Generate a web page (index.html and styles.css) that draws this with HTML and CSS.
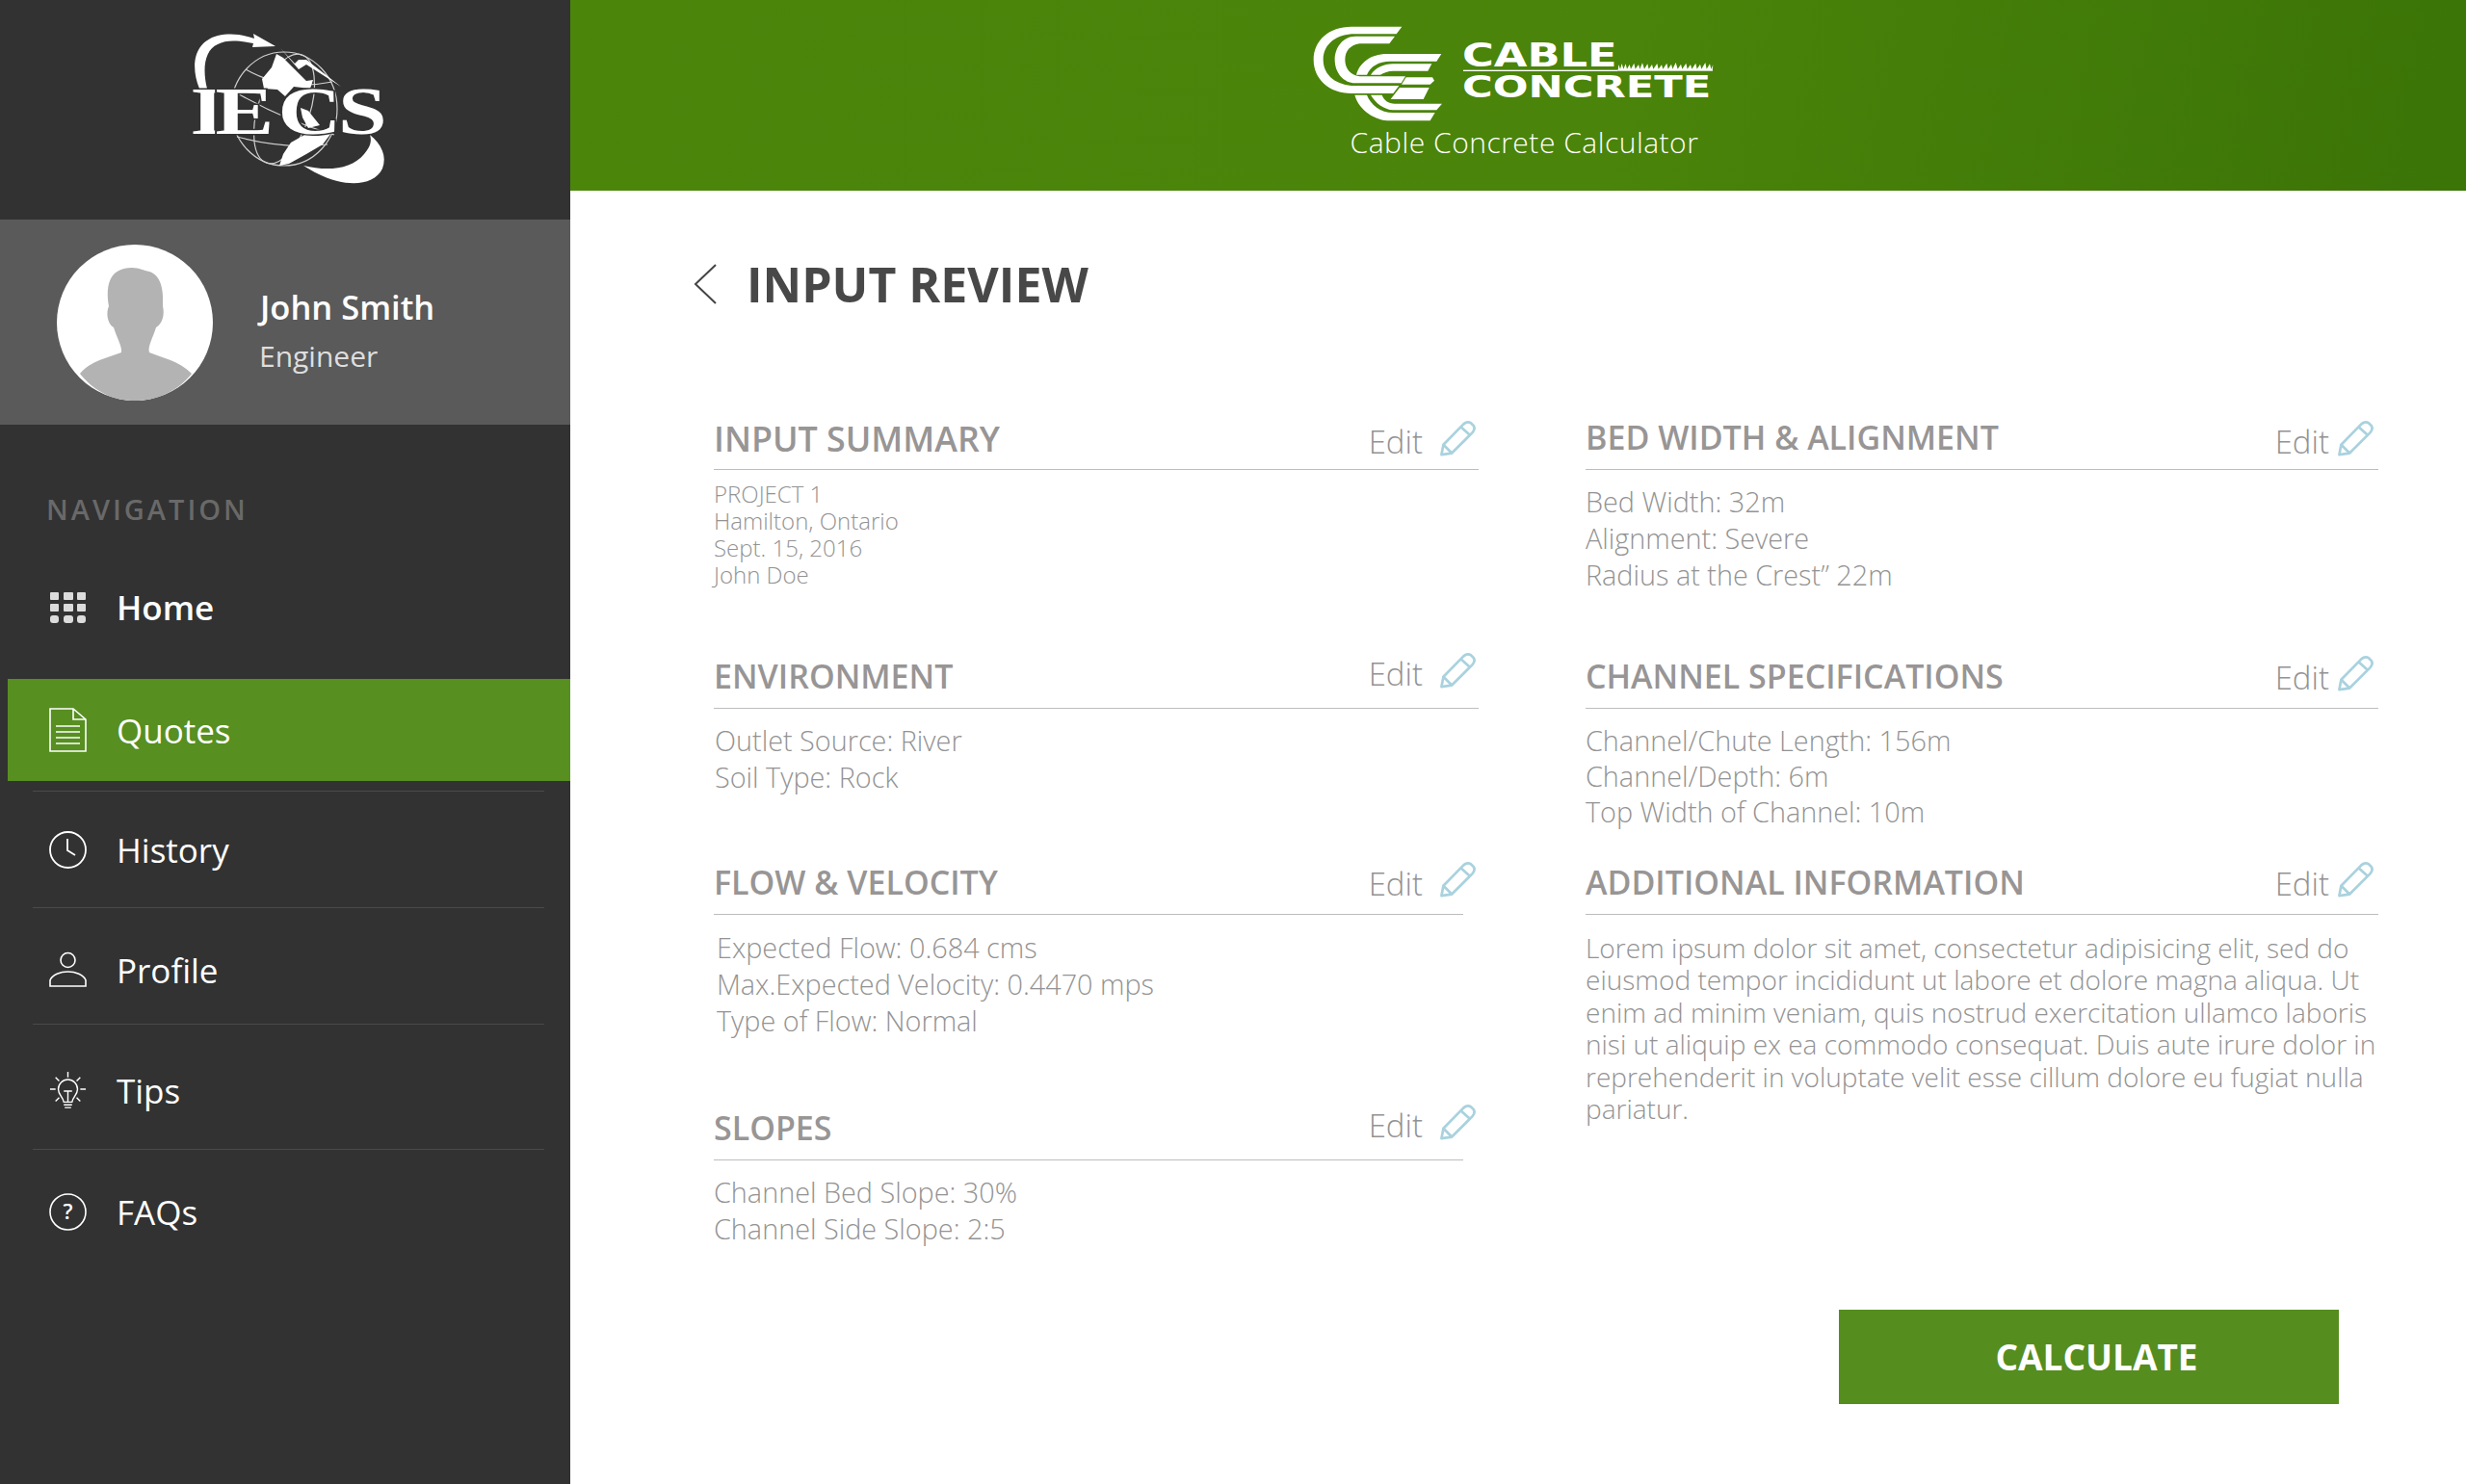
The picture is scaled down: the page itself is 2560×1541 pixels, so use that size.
FILE: index.html
```html
<!DOCTYPE html>
<html lang="en">
<head>
  <meta charset="UTF-8" />
  <title>Cable Concrete Calculator - Input Review</title>
  <link rel="stylesheet" href="styles.css">
</head>
<body>
  <svg class="defs" width="0" height="0">
    <symbol id="pencil" viewBox="0 0 38 38">
      <path d="M1.5 36.5 L3.5 26 L25 4 Q29 0.5 33 3 L35.5 5.5 Q38 9 34.5 13 L12.5 35 Z M3.5 26 L12.5 35 M22 7 L32 16" fill="none" stroke="#a9d2de" stroke-width="2.8" stroke-linejoin="round"/>
    </symbol>
  </svg>

  <aside class="sidebar">
    <div class="brand">
      <svg class="iecs-logo" width="592" height="228" viewBox="0 0 592 228">
        <g fill="none" stroke="#cfcfcf" stroke-width="1.2">
          <ellipse cx="295" cy="113" rx="55" ry="59"/>
          <ellipse cx="295" cy="113" rx="27" ry="59" transform="rotate(18 295 113)"/>
          <path d="M243 95 Q295 125 347 140 M246 142 Q295 155 340 150 M255 72 Q295 95 345 85"/>
        </g>
        <path d="M207 92 C198 70 200 44 226 37 C240 34 252 36 264 40 L263 35 L286 48 L262 49 L263 45 C248 42 235 41 226 46 C212 52 210 72 215 92 Z" fill="#fff"/>
        <path d="M291 50 L310 72 L318 67 L354 90 L318 62 L310 62 L306 66 Z" fill="#fff"/>
        <path d="M315 172 C340 178 365 176 378 160 C385 152 386 146 384 140 C396 150 402 162 397 175 C390 190 370 193 350 188 C335 184 325 178 315 172 Z" fill="#fff"/>
        <path d="M287 56 L294 60 L306 72 L318 84 L325 83 L322 92 L305 90 L296 100 L288 93 L274 92 L272 82 L282 70 Z" fill="#fff"/>
        <path d="M302 148 L325 135 L344 138 L335 150 L318 160 L300 170 L290 172 L294 160 Z" fill="#fff"/>
        <text class="iecs-text" transform="scale(1.3 1)" y="139">
          <tspan x="152">I</tspan><tspan x="172">E</tspan><tspan x="222">C</tspan><tspan x="270">S</tspan>
        </text>
        <path d="M312 112 L320 115 L332 130 L320 133 L314 122 Z" fill="#fff"/>
      </svg>
    </div>

    <div class="profile">
      <svg class="avatar" width="162" height="162" viewBox="0 0 162 162">
        <circle cx="81" cy="81" r="81" fill="#fff"/>
        <path d="M24 134 C36 120 52 118 67 112 C68 106 62 96 59 86 C52 82 51 70 54 64 C50 40 56 24 78 24 C86 24 90 27 96 28 C108 32 111 46 110 64 C112 72 110 82 103 86 C100 96 94 106 96 112 C110 118 126 120 140 134 C126 152 104 162 81 162 C58 162 38 152 24 134 Z" fill="#b3b3b3"/>
      </svg>
      <div class="profile-text">
        <div class="profile-name">John Smith</div>
        <div class="profile-role">Engineer</div>
      </div>
    </div>

    <div class="nav-label">NAVIGATION</div>

    <ul class="nav">
      <li class="nav-item nav-home">
        <a class="nav-link nav-strong">
          <svg class="nav-icon" viewBox="0 0 39 39" fill="#dcdcdc">
            <rect x="1" y="4" width="9" height="8" rx="1"/><rect x="15" y="4" width="10" height="8" rx="1"/><rect x="29" y="4" width="9" height="8" rx="1"/>
            <rect x="1" y="16" width="9" height="8" rx="1"/><rect x="15" y="16" width="10" height="8" rx="1"/><rect x="29" y="16" width="9" height="8" rx="1"/>
            <rect x="1" y="28" width="9" height="8" rx="3"/><rect x="15" y="28" width="10" height="8" rx="3"/><rect x="29" y="28" width="9" height="8" rx="3"/>
          </svg>
          Home
        </a>
      </li>
      <li class="nav-item nav-quotes">
        <a class="nav-link active">
          <svg class="nav-icon nav-icon-tall" viewBox="0 0 39 46" fill="none" stroke="#fff" stroke-width="1.6">
            <path d="M1 1 H25 L38 12 V45 H1 Z M25 1 V12 H38"/>
            <path d="M7 19 H32 M7 25 H32 M7 31 H32 M7 37 H32"/>
          </svg>
          Quotes
        </a>
      </li>
      <li class="nav-item">
        <a class="nav-link">
          <svg class="nav-icon" viewBox="0 0 39 39" fill="none" stroke="#fff" stroke-width="1.8">
            <circle cx="19.5" cy="19.5" r="18.5"/>
            <path d="M19 8 V20 L27 25"/>
          </svg>
          History
        </a>
      </li>
      <li class="nav-item nav-low">
        <a class="nav-link">
          <svg class="nav-icon" viewBox="0 0 39 39" fill="none" stroke="#fff" stroke-width="1.6">
            <circle cx="19.5" cy="9" r="7.5"/>
            <path d="M1 36 V30 C3 24 12 21 19.5 21 C27 21 36 24 38 30 V36 Z"/>
          </svg>
          Profile
        </a>
      </li>
      <li class="nav-item nav-low nav-tall">
        <a class="nav-link">
          <svg class="nav-icon" viewBox="0 0 39 41" fill="none" stroke="#fff" stroke-width="1.5">
            <path d="M19.5 0 V6 M0 19 H6 M33 19 H39 M6 6 L10 10 M33 6 L29 10 M6 32 L10 28 M33 32 L29 28"/>
            <path d="M15 33 C14 27 9 25 9 19 A10.5 10.5 0 0 1 30 19 C30 25 25 27 24 33 Z M19.5 33 V21 M15 21 H24 M15 36 H24 M16 39 H23"/>
          </svg>
          Tips
        </a>
      </li>
      <li class="nav-item nav-low nav-last">
        <a class="nav-link">
          <svg class="nav-icon" viewBox="0 0 39 39" fill="none" stroke="#fff" stroke-width="1.6">
            <circle cx="19.5" cy="19.5" r="18.5"/>
            <text class="faq-mark" x="19.5" y="27">?</text>
          </svg>
          FAQs
        </a>
      </li>
    </ul>
  </aside>

  <div class="main">
    <header class="topbar">
      <svg class="cc-logo" width="420" height="105" viewBox="190 80 1260 315">
        <g fill="#fff">
          <path d="M467 82 H310 C240 82 192 125 192 185 C192 245 240 290 310 290 H440 L458 266 H320 C265 266 222 235 222 185 C222 135 265 105 320 105 H450 Z"/>
          <path d="M445 112 H322 C285 112 258 145 258 185 C258 225 285 258 322 258 H465 L478 237 H335 C305 232 290 212 290 185 C290 158 305 140 335 135 H428 Z"/>
          <path d="M590 167 H420 C370 167 335 195 325 232 H358 C370 205 395 190 430 190 H575 Z"/>
          <path d="M560 198 H440 C410 198 385 210 370 232 H400 C410 225 425 220 440 220 H548 Z"/>
          <path d="M320 295 C335 345 385 375 430 375 H555 L570 350 H440 C400 350 370 325 358 295 Z"/>
          <path d="M370 295 C385 320 410 340 440 342 H575 L592 322 H445 C425 322 410 310 405 295 Z"/>
          <path d="M480 240 H562 L568 250 L555 262 H466 Z"/>
          <path d="M460 272 H552 L534 308 H432 Z"/>
          <rect x="658" y="217" width="482" height="4"/>
          <rect x="1140" y="216" width="295" height="4"/>
          <path d="M1140 218 L1142 200 L1147 214 L1152 197 L1157 214 L1164 198 L1168 214 L1176 200 L1180 214 L1190 196 L1194 214 L1204 200 L1208 214 L1216 195 L1222 214 L1232 198 L1236 214 L1246 200 L1250 214 L1262 197 L1266 214 L1276 201 L1280 214 L1292 196 L1296 214 L1306 199 L1310 214 L1320 194 L1326 214 L1336 199 L1340 214 L1352 196 L1356 214 L1366 200 L1370 214 L1382 196 L1386 214 L1396 199 L1400 214 L1412 194 L1416 214 L1426 198 L1430 214 L1436 201 L1434 218 Z"/>
          <text class="cc-word" x="655" y="205" font-size="103" textLength="482" lengthAdjust="spacingAndGlyphs">CABLE</text>
          <text class="cc-word" x="655" y="302" font-size="96" textLength="775" lengthAdjust="spacingAndGlyphs">CONCRETE</text>
        </g>
      </svg>
      <div class="topbar-title">Cable Concrete Calculator</div>
    </header>

    <div class="title-row">
      <svg class="back" width="24" height="42" viewBox="0 0 24 42" fill="none" stroke="#444" stroke-width="2">
        <path d="M23 1 L2 21 L23 41"/>
      </svg>
      <h1>INPUT REVIEW</h1>
    </div>

    <div class="review-grid">
      <section>
        <div class="head head-first">
          <h2 class="h2-wide">INPUT SUMMARY</h2>
          <span class="edit">Edit</span>
          <svg class="pencil"><use href="#pencil"/></svg>
        </div>
        <div class="rule"></div>
        <div class="summary">PROJECT 1<br>Hamilton, Ontario<br>Sept. 15, 2016<br>John Doe</div>
      </section>

      <section>
        <div class="head head-right head-first">
          <h2>BED WIDTH &amp; ALIGNMENT</h2>
          <span class="edit">Edit</span>
          <svg class="pencil"><use href="#pencil"/></svg>
        </div>
        <div class="rule"></div>
        <div class="info">Bed Width: 32m<br>Alignment: Severe<br>Radius at the Crest” 22m</div>
      </section>

      <section>
        <div class="head head-up">
          <h2>ENVIRONMENT</h2>
          <span class="edit">Edit</span>
          <svg class="pencil"><use href="#pencil"/></svg>
        </div>
        <div class="rule"></div>
        <div class="info info-env">Outlet Source: River<br>Soil Type: Rock</div>
      </section>

      <section>
        <div class="head head-right">
          <h2>CHANNEL SPECIFICATIONS</h2>
          <span class="edit">Edit</span>
          <svg class="pencil"><use href="#pencil"/></svg>
        </div>
        <div class="rule"></div>
        <div class="info info-tight">Channel/Chute Length: 156m<br>Channel/Depth: 6m<br>Top Width of Channel: 10m</div>
      </section>

      <section>
        <div class="head">
          <h2>FLOW &amp; VELOCITY</h2>
          <span class="edit">Edit</span>
          <svg class="pencil"><use href="#pencil"/></svg>
        </div>
        <div class="rule rule-short"></div>
        <div class="info info-flow">Expected Flow: 0.684 cms<br>Max.Expected Velocity: 0.4470 mps<br>Type of Flow: Normal</div>
      </section>

      <section class="span-two">
        <div class="head head-right">
          <h2>ADDITIONAL INFORMATION</h2>
          <span class="edit">Edit</span>
          <svg class="pencil"><use href="#pencil"/></svg>
        </div>
        <div class="rule"></div>
        <p class="lorem">Lorem ipsum dolor sit amet, consectetur adipisicing elit, sed do<br>eiusmod tempor incididunt ut labore et dolore magna aliqua. Ut<br>enim ad minim veniam, quis nostrud exercitation ullamco laboris<br>nisi ut aliquip ex ea commodo consequat. Duis aute irure dolor in<br>reprehenderit in voluptate velit esse cillum dolore eu fugiat nulla<br>pariatur.</p>
      </section>

      <section>
        <div class="head head-up">
          <h2>SLOPES</h2>
          <span class="edit">Edit</span>
          <svg class="pencil"><use href="#pencil"/></svg>
        </div>
        <div class="rule rule-short"></div>
        <div class="info">Channel Bed Slope: 30%<br>Channel Side Slope: 2:5</div>
      </section>
    </div>

    <div class="actions">
      <button class="calculate">CALCULATE</button>
    </div>
  </div>
</body>
</html>
```

FILE: styles.css
```css
* {
  box-sizing: border-box;
}
html, body {
  margin: 0;
  height: 100%;
}
body {
  display: flex;
  font-family: "Open Sans", "Liberation Sans", sans-serif;
  background-color: #fff;
  overflow: hidden;
}
.defs {
  position: absolute;
}

/* sidebar */
.sidebar {
  width: 592px;
  flex-shrink: 0;
  background-color: #323232;
  color: #fff;
}
.brand {
  height: 228px;
}
.iecs-logo {
  display: block;
}
.iecs-text {
  font-family: "Liberation Serif", serif;
  font-weight: 700;
  font-size: 70px;
  fill: #fff;
  stroke: #323232;
  stroke-width: 3px;
  paint-order: stroke;
}
.profile {
  height: 213px;
  padding-left: 59px;
  display: flex;
  align-items: center;
  gap: 47px;
  background-color: #5a5a5a;
}
.profile-text {
  padding-top: 17px;
}
.profile-name {
  margin-left: 2px;
  font-size: 34.5px;
  line-height: 50px;
  font-weight: 600;
}
.profile-role {
  margin-top: 4px;
  margin-left: 1px;
  font-size: 30px;
  line-height: 44px;
  color: #dedede;
}
.nav-label {
  margin: 68px 0 0 48px;
  font-size: 29px;
  line-height: 40px;
  font-weight: 600;
  letter-spacing: 3px;
  color: #696969;
}
.nav {
  list-style: none;
  margin: 23px 0 0;
  padding: 0;
}
.nav-item {
  margin: 0 27px 0 34px;
  height: 121px;
  border-bottom: 1px solid #4a4a4a;
}
.nav-home {
  height: 133px;
  padding-bottom: 17px;
  border-bottom: 0;
}
.nav-quotes {
  height: 117px;
  padding-bottom: 10px;
}
.nav-low {
  padding-top: 8px;
}
.nav-tall {
  height: 130px;
}
.nav-last {
  border-bottom: 0;
}
.nav-link {
  height: 100%;
  padding-left: 17px;
  display: flex;
  align-items: center;
  gap: 31px;
  font-size: 35px;
}
.nav-strong {
  font-weight: 600;
}
.nav-link.active {
  margin: 0 -27px 0 -26px;
  padding-left: 43px;
  background-color: #578f21;
}
.nav-icon {
  width: 39px;
  height: 39px;
  flex-shrink: 0;
}
.nav-icon-tall {
  height: 46px;
}
.faq-mark {
  font-family: "Open Sans", sans-serif;
  font-size: 22px;
  font-weight: 600;
  text-anchor: middle;
  fill: #fff;
  stroke: none;
}

/* main */
.main {
  flex: 1;
  min-width: 0;
}
.topbar {
  height: 198px;
  padding-top: 27px;
  display: flex;
  flex-direction: column;
  align-items: center;
  background: linear-gradient(100deg, #4b860b 0%, #4a840a 55%, #3b7407 100%);
}
.cc-logo {
  display: block;
  margin-right: 6px;
}
.cc-word {
  font-family: "DejaVu Sans", sans-serif;
  font-weight: 700;
}
.topbar-title {
  margin: -4px 0 0 13px;
  font-size: 30px;
  line-height: 40px;
  font-weight: 300;
  letter-spacing: 0.5px;
  color: #fff;
}
.title-row {
  height: 230px;
  padding: 64px 0 0 128px;
  display: flex;
  align-items: flex-start;
  gap: 31px;
}
.back {
  margin-top: 12px;
}
h1 {
  margin: 0;
  font-size: 50px;
  line-height: 66px;
  font-weight: 700;
  color: #484848;
}
.review-grid {
  margin: 0 91px 0 149px;
  display: grid;
  grid-template-columns: 794px 823px;
  grid-template-rows: 248px 214px 255px 215px;
  column-gap: 111px;
}
.span-two {
  grid-row: span 2;
}
.head {
  height: 59px;
  padding-right: 3px;
  display: flex;
  align-items: flex-end;
  gap: 18px;
  color: #949292;
}
.head-right {
  padding-right: 5px;
  gap: 9px;
}
h2 {
  margin: 0 auto 10px 0;
  font-size: 34px;
  line-height: 46px;
  font-weight: 600;
  color: #989595;
}
.h2-wide {
  margin-bottom: 9px;
  font-size: 35.8px;
}
.edit {
  margin-bottom: 8px;
  font-size: 33px;
  line-height: 46px;
  font-weight: 300;
}
.pencil {
  width: 37px;
  height: 38px;
  margin-bottom: 17px;
}
.head-first .edit {
  margin-bottom: 5px;
}
.head-first .pencil {
  margin-bottom: 13px;
}
.head-up .edit {
  margin-bottom: 12px;
}
.head-up .pencil {
  margin-bottom: 20px;
}
.rule {
  height: 1px;
  background-color: #bdbdbd;
}
.rule-short {
  margin-right: 16px;
}
.summary {
  margin-top: 11px;
  font-size: 24px;
  line-height: 28px;
  font-weight: 300;
  color: #939393;
}
.info {
  margin-top: 14px;
  font-size: 28.8px;
  line-height: 38px;
  font-weight: 300;
  color: #939393;
}
.info-env {
  padding-left: 1px;
}
.info-tight {
  line-height: 37px;
}
.info-flow {
  margin-top: 15px;
  padding-left: 3px;
}
.lorem {
  margin: 18px 0 0;
  font-size: 28px;
  line-height: 33.4px;
  font-weight: 300;
  color: #939393;
  white-space: nowrap;
}
.actions {
  padding-right: 132px;
  display: flex;
  justify-content: flex-end;
}
.calculate {
  width: 519px;
  height: 98px;
  padding: 0 0 2px 16px;
  border: 0;
  background-color: #558d1f;
  color: #fff;
  font-family: inherit;
  font-size: 37px;
  font-weight: 700;
}
```
